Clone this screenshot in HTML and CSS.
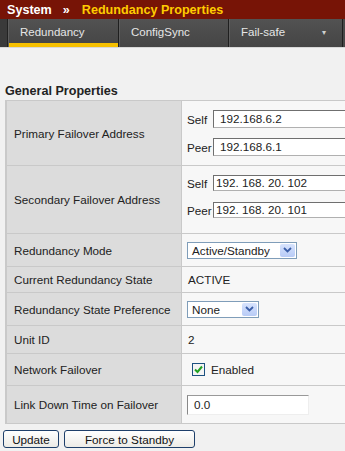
FILE: index.html
```html
<!DOCTYPE html>
<html>
<head>
<meta charset="utf-8">
<link rel="stylesheet" href="styles.css">
</head>
<body>
<div class="crumb"><span class="sys">System</span><span class="sep">&raquo;</span><span class="page">Redundancy Properties</span></div>
<div class="tabs">
  <div class="stub"></div>
  <div class="tab active">Redundancy</div>
  <div class="tab">ConfigSync</div>
  <div class="tab">Fail-safe<span class="caret">&#9662;</span></div>
</div>
<div class="content">
  <div class="title">General Properties</div>
  <table class="props">
    <tr class="r1">
      <td class="lbl">Primary Failover Address</td>
      <td class="val">
        <div class="pair">
          <div class="line"><span class="k">Self</span><span class="inp">192.168.6.2</span></div>
          <div class="line"><span class="k">Peer</span><span class="inp">192.168.6.1</span></div>
        </div>
      </td>
    </tr>
    <tr class="r2">
      <td class="lbl">Secondary Failover Address</td>
      <td class="val">
        <div class="pair pair2">
          <div class="line"><span class="k">Self</span><span class="inp tight">192. 168. 20. 102</span></div>
          <div class="line"><span class="k">Peer</span><span class="inp tight">192. 168. 20. 101</span></div>
        </div>
      </td>
    </tr>
    <tr class="r3">
      <td class="lbl">Redundancy Mode</td>
      <td class="val"><span class="sel w1">Active/Standby<span class="btn"><svg width="9" height="6" viewBox="0 0 9 6"><path d="M1 1 L4.5 4.5 L8 1" fill="none" stroke="#3b5ea8" stroke-width="1.8"/></svg></span></span></td>
    </tr>
    <tr class="r4">
      <td class="lbl">Current Redundancy State</td>
      <td class="val txt">ACTIVE</td>
    </tr>
    <tr class="r5">
      <td class="lbl">Redundancy State Preference</td>
      <td class="val"><span class="sel w2">None<span class="btn"><svg width="9" height="6" viewBox="0 0 9 6"><path d="M1 1 L4.5 4.5 L8 1" fill="none" stroke="#3b5ea8" stroke-width="1.8"/></svg></span></span></td>
    </tr>
    <tr class="r6">
      <td class="lbl">Unit ID</td>
      <td class="val txt">2</td>
    </tr>
    <tr class="r7">
      <td class="lbl">Network Failover</td>
      <td class="val"><span class="chk"><span class="box"><svg width="11" height="11" viewBox="0 0 11 11"><path d="M2 5.5 L4.5 8 L9 2.5" fill="none" stroke="#21a121" stroke-width="2"/></svg></span>Enabled</span></td>
    </tr>
    <tr class="r8">
      <td class="lbl">Link Down Time on Failover</td>
      <td class="val"><span class="inp short">0.0</span></td>
    </tr>
  </table>
  <div class="actions">
    <button class="b b1">Update</button>
    <button class="b b2">Force to Standby</button>
  </div>
</div>
</body>
</html>
```
FILE: styles.css
```css
html, body {
  margin: 0;
  padding: 0;
}
body {
  width: 345px;
  height: 451px;
  overflow: hidden;
  background: #f1f1f1;
  font-family: "Liberation Sans", Arial, sans-serif;
  font-size: 11.7px;
  color: #222;
}
.crumb {
  height: 19px;
  background: #771406;
  display: flex;
  align-items: center;
  padding-left: 7px;
  font-weight: bold;
  font-size: 12.6px;
  white-space: nowrap;
}
.crumb .sys { color: #fff; }
.crumb .sep { color: #fff; margin: 0 12px 0 11px; }
.crumb .page { color: #ffcc00; }
.tabs {
  height: 28px;
  background: #494949;
  display: flex;
  border-bottom: 1px solid #d8d8d8;
}
.tabs .stub {
  width: 7px;
  background: #3a3a3a;
  border-right: 1px solid #222;
}
.tab {
  box-sizing: border-box;
  width: 110px;
  height: 28px;
  border-right: 1px solid #1f1f1f;
  border-left: 1px solid #5e5e5e;
  color: #e6e6e6;
  font-size: 11.5px;
  display: flex;
  align-items: center;
  padding-left: 11px;
  padding-bottom: 3px;
  position: relative;
  background: linear-gradient(#525252, #454545);
}
.tab.active {
  width: 111px;
  box-shadow: inset 0 -4px 0 #f6c000;
}
.tab:last-child { width: 114px; }
.caret {
  position: absolute;
  right: 16px;
  top: 9px;
  font-size: 8px;
  color: #cfcfcf;
}
.content {
  padding: 36px 0 0 5px;
}
.title {
  font-weight: bold;
  font-size: 12.6px;
  color: #222;
  height: 16px;
  line-height: 15px;
}
.props {
  border-collapse: collapse;
  width: 340px;
}
.props td {
  border: 1px solid #c9c9c9;
  padding: 0;
  vertical-align: middle;
}
.lbl {
  width: 168px;
  background: #dcdcdc;
  padding-left: 7px !important;
  border-left: 2px solid #c9c9c9 !important;
}
.val {
  background: #f7f7f7;
  padding-left: 5px !important;
  border-right: none !important;
}
.txt { padding-left: 6px !important; }
.r1 td { height: 64px; }
.r2 td { height: 67px; }
.r3 td { height: 32px; }
.r4 td { height: 25px; }
.r5 td { height: 32px; }
.r6 td { height: 27px; }
.r7 td { height: 31px; }
.r8 td { height: 37px; }
.pair {
  display: flex;
  flex-direction: column;
  gap: 10px;
}
.pair2 { gap: 11px; padding-bottom: 6px; }
.line {
  display: flex;
  align-items: center;
}
.k {
  width: 26px;
  flex: none;
}
.inp {
  box-sizing: border-box;
  display: inline-block;
  width: 132px;
  height: 18px;
  line-height: 16px;
  background: #fff;
  border: 1px solid #b0b0b0;
  border-top-color: #6f6f6f;
  border-left-color: #6f6f6f;
  border-right: none;
  padding-left: 6px;
  font-size: 11.7px;
  color: #222;
  white-space: nowrap;
}
.inp.tight { padding-left: 2px; height: 16px; line-height: 14px; }
.inp.short { width: 122px; height: 20px; line-height: 18px; padding-left: 6px; border: 1px solid #eee; border-top-color: #999; border-left-color: #888; }
.sel {
  box-sizing: border-box;
  display: inline-flex;
  align-items: center;
  height: 17px;
  background: #fff;
  border: 1px solid #7f9db9;
  padding-left: 4px;
  font-size: 11.7px;
  position: relative;
}
.sel.w1 { width: 110px; }
.sel.w2 { width: 72px; }
.btn {
  position: absolute;
  right: 1px;
  top: 1px;
  width: 15px;
  height: 13px;
  background: linear-gradient(#d7e3fd, #b8cbf6);
  border-radius: 2px;
  display: flex;
  align-items: center;
  justify-content: center;
}
.chk {
  display: inline-flex;
  align-items: center;
  margin-left: 5px;
  font-size: 11.7px;
}
.box {
  box-sizing: border-box;
  width: 13px;
  height: 13px;
  border: 1px solid #1c5180;
  background: #f4f4f4;
  margin-right: 6px;
  display: flex;
  align-items: center;
  justify-content: center;
}
.actions {
  display: flex;
  gap: 5px;
  padding-top: 6px;
  margin-left: -2px;
}
.b {
  box-sizing: border-box;
  height: 18px;
  border: 1px solid #1e3f6a;
  border-radius: 3px;
  background: linear-gradient(#ffffff, #ecebe6);
  font-family: "Liberation Sans", Arial, sans-serif;
  font-size: 11.7px;
  color: #111;
  padding: 0;
}
.b1 { width: 56px; }
.b2 { width: 131px; }
```
